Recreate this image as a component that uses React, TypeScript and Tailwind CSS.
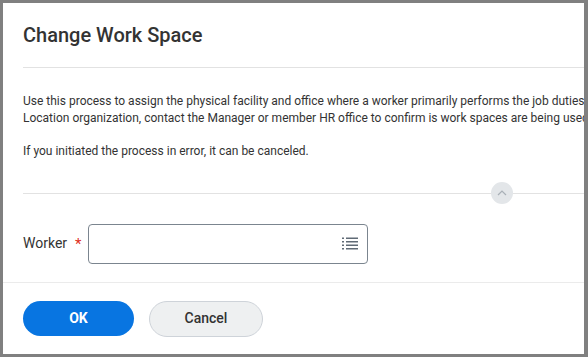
import React from "react";

export default function App() {
  return (
    <div
      className="w-[588px] h-[357px] bg-[#808080] pt-[3px] pl-[3px] pr-[4px] pb-[3px]"
      style={{ fontFamily: "Roboto, 'Liberation Sans', sans-serif" }}
    >
      <div className="w-full h-full bg-white flex flex-col overflow-hidden">
        <div className="pl-[20px]">
          <div className="h-[64px] flex items-end pb-[20px]">
            <h1 className="text-[20px] leading-[24px] font-medium text-[#333333]">Change Work Space</h1>
          </div>
          <div className="h-px bg-[#e2e2e2]" />
          <div className="pt-[25px] text-[12px] leading-[16.5px] text-[#333333] whitespace-nowrap overflow-hidden">
            <p>
              Use this process to assign the physical facility and office where a worker primarily performs the job duties of their position.
              <br />
              Location organization, contact the Manager or member HR office to confirm is work spaces are being used for the location.
            </p>
            <p className="mt-[17px]">If you initiated the process in error, it can be canceled.</p>
          </div>
          <div className="relative mt-[33px] h-px bg-[#e2e2e2]">
            <div className="absolute left-[468px] top-[-11px] w-[22px] h-[22px] rounded-full bg-[#e3e6e9] flex items-center justify-center">
              <svg width="10" height="6" viewBox="0 0 10 6" fill="none">
                <path d="M1 5 L5 1 L9 5" stroke="#a9b0b7" strokeWidth="1.2" />
              </svg>
            </div>
          </div>
          <div className="flex items-center mt-[30px] h-[40px]">
            <span className="text-[14px] text-[#333333] w-[52px]">Worker</span>
            <span className="text-[#de2e21] text-[15px] leading-none w-[13px] mt-[2px]">*</span>
            <div className="w-[280px] h-[40px] border border-[#7b858f] rounded-[4px] flex items-center justify-end pr-[9px]">
              <svg width="16" height="13" viewBox="0 0 16 13" fill="#606b76">
                <rect x="0" y="0.5" width="2" height="1.5" />
                <rect x="4" y="0.5" width="12" height="1.5" />
                <rect x="0" y="4" width="2" height="1.5" />
                <rect x="4" y="4" width="12" height="1.5" />
                <rect x="0" y="7.5" width="2" height="1.5" />
                <rect x="4" y="7.5" width="12" height="1.5" />
                <rect x="0" y="11" width="2" height="1.5" />
                <rect x="4" y="11" width="12" height="1.5" />
              </svg>
            </div>
          </div>
        </div>
        <div className="mt-[18px] h-px bg-[#ebebeb]" />
        <div className="pl-[20px] pt-[18px] flex items-center gap-[15px]">
          <button className="w-[111px] h-[35px] rounded-full bg-[#0875e1] text-white text-[14px] font-bold">
            OK
          </button>
          <button className="w-[114px] h-[36px] rounded-full bg-[#eef0f1] border border-[#ced3d9] text-[#333333] text-[14px] font-medium">
            Cancel
          </button>
        </div>
      </div>
    </div>
  );
}
